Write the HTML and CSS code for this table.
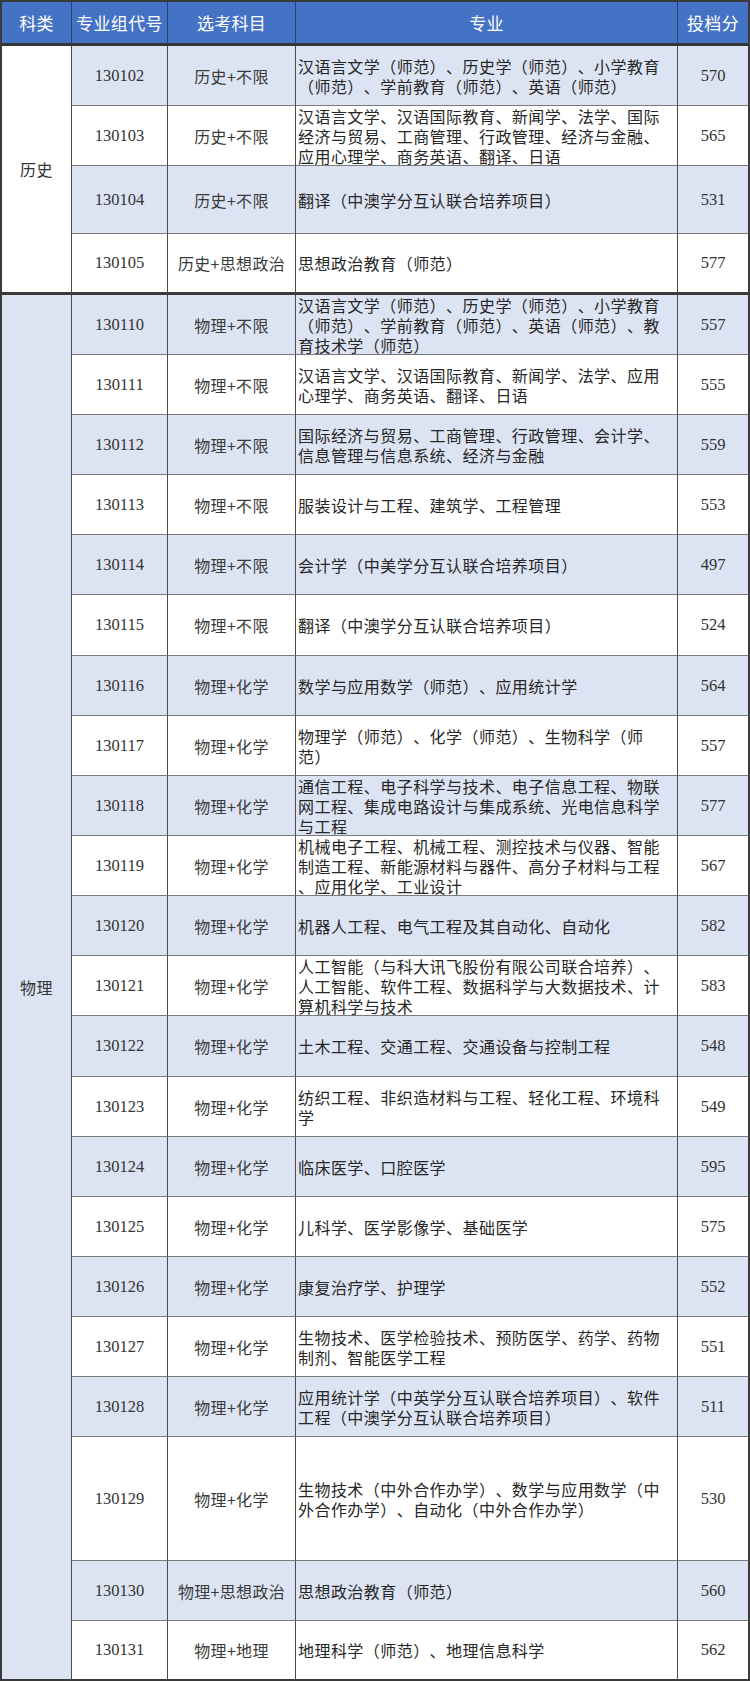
FILE: index.html
```html
<!DOCTYPE html>
<html lang="zh-CN">
<head>
<meta charset="utf-8">
<title>投档分</title>
<link rel="stylesheet" href="styles.css">
</head>
<body>
<table class="score-table">
  <colgroup>
    <col class="c-type"><col class="c-code"><col class="c-subj"><col class="c-major"><col class="c-score">
  </colgroup>
  <thead>
    <tr class="head-row">
      <th>科类</th><th>专业组代号</th><th>选考科目</th><th>专业</th><th class="last">投档分</th>
    </tr>
  </thead>
  <tbody>
    <tr class="r60 alt">
      <td class="type group-end" rowspan="4">历史</td>
      <td class="num">130102</td><td class="subj">历史+不限</td>
      <td class="major"><div>汉语言文学（师范）、历史学（师范）、小学教育<br>（师范）、学前教育（师范）、英语（师范）</div></td>
      <td class="num last">570</td>
    </tr>
    <tr class="r60">
      <td class="num">130103</td><td class="subj">历史+不限</td>
      <td class="major"><div>汉语言文学、汉语国际教育、新闻学、法学、国际<br>经济与贸易、工商管理、行政管理、经济与金融、<br>应用心理学、商务英语、翻译、日语</div></td>
      <td class="num last">565</td>
    </tr>
    <tr class="r68 alt">
      <td class="num">130104</td><td class="subj">历史+不限</td>
      <td class="major"><div>翻译（中澳学分互认联合培养项目）</div></td>
      <td class="num last">531</td>
    </tr>
    <tr class="r61 group-last">
      <td class="num">130105</td><td class="subj">历史+思想政治</td>
      <td class="major"><div>思想政治教育（师范）</div></td>
      <td class="num last">577</td>
    </tr>

    <tr class="r60 alt">
      <td class="type type-alt table-end" rowspan="22">物理</td>
      <td class="num">130110</td><td class="subj">物理+不限</td>
      <td class="major"><div>汉语言文学（师范）、历史学（师范）、小学教育<br>（师范）、学前教育（师范）、英语（师范）、教<br>育技术学（师范）</div></td>
      <td class="num last">557</td>
    </tr>
    <tr class="r60">
      <td class="num">130111</td><td class="subj">物理+不限</td>
      <td class="major"><div>汉语言文学、汉语国际教育、新闻学、法学、应用<br>心理学、商务英语、翻译、日语</div></td>
      <td class="num last">555</td>
    </tr>
    <tr class="r60 alt">
      <td class="num">130112</td><td class="subj">物理+不限</td>
      <td class="major"><div>国际经济与贸易、工商管理、行政管理、会计学、<br>信息管理与信息系统、经济与金融</div></td>
      <td class="num last">559</td>
    </tr>
    <tr class="r60">
      <td class="num">130113</td><td class="subj">物理+不限</td>
      <td class="major"><div>服装设计与工程、建筑学、工程管理</div></td>
      <td class="num last">553</td>
    </tr>
    <tr class="r60 alt">
      <td class="num">130114</td><td class="subj">物理+不限</td>
      <td class="major"><div>会计学（中美学分互认联合培养项目）</div></td>
      <td class="num last">497</td>
    </tr>
    <tr class="r61">
      <td class="num">130115</td><td class="subj">物理+不限</td>
      <td class="major"><div>翻译（中澳学分互认联合培养项目）</div></td>
      <td class="num last">524</td>
    </tr>
    <tr class="r60 alt">
      <td class="num">130116</td><td class="subj">物理+化学</td>
      <td class="major"><div>数学与应用数学（师范）、应用统计学</div></td>
      <td class="num last">564</td>
    </tr>
    <tr class="r60">
      <td class="num">130117</td><td class="subj">物理+化学</td>
      <td class="major"><div>物理学（师范）、化学（师范）、生物科学（师<br>范）</div></td>
      <td class="num last">557</td>
    </tr>
    <tr class="r60 alt">
      <td class="num">130118</td><td class="subj">物理+化学</td>
      <td class="major"><div>通信工程、电子科学与技术、电子信息工程、物联<br>网工程、集成电路设计与集成系统、光电信息科学<br>与工程</div></td>
      <td class="num last">577</td>
    </tr>
    <tr class="r60">
      <td class="num">130119</td><td class="subj">物理+化学</td>
      <td class="major"><div>机械电子工程、机械工程、测控技术与仪器、智能<br>制造工程、新能源材料与器件、高分子材料与工程<br>、应用化学、工业设计</div></td>
      <td class="num last">567</td>
    </tr>
    <tr class="r60 alt">
      <td class="num">130120</td><td class="subj">物理+化学</td>
      <td class="major"><div>机器人工程、电气工程及其自动化、自动化</div></td>
      <td class="num last">582</td>
    </tr>
    <tr class="r60">
      <td class="num">130121</td><td class="subj">物理+化学</td>
      <td class="major"><div>人工智能（与科大讯飞股份有限公司联合培养）、<br>人工智能、软件工程、数据科学与大数据技术、计<br>算机科学与技术</div></td>
      <td class="num last">583</td>
    </tr>
    <tr class="r61 alt">
      <td class="num">130122</td><td class="subj">物理+化学</td>
      <td class="major"><div>土木工程、交通工程、交通设备与控制工程</div></td>
      <td class="num last">548</td>
    </tr>
    <tr class="r60">
      <td class="num">130123</td><td class="subj">物理+化学</td>
      <td class="major"><div>纺织工程、非织造材料与工程、轻化工程、环境科<br>学</div></td>
      <td class="num last">549</td>
    </tr>
    <tr class="r60 alt">
      <td class="num">130124</td><td class="subj">物理+化学</td>
      <td class="major"><div>临床医学、口腔医学</div></td>
      <td class="num last">595</td>
    </tr>
    <tr class="r60">
      <td class="num">130125</td><td class="subj">物理+化学</td>
      <td class="major"><div>儿科学、医学影像学、基础医学</div></td>
      <td class="num last">575</td>
    </tr>
    <tr class="r60 alt">
      <td class="num">130126</td><td class="subj">物理+化学</td>
      <td class="major"><div>康复治疗学、护理学</div></td>
      <td class="num last">552</td>
    </tr>
    <tr class="r60">
      <td class="num">130127</td><td class="subj">物理+化学</td>
      <td class="major"><div>生物技术、医学检验技术、预防医学、药学、药物<br>制剂、智能医学工程</div></td>
      <td class="num last">551</td>
    </tr>
    <tr class="r60 alt">
      <td class="num">130128</td><td class="subj">物理+化学</td>
      <td class="major"><div>应用统计学（中英学分互认联合培养项目）、软件<br>工程（中澳学分互认联合培养项目）</div></td>
      <td class="num last">511</td>
    </tr>
    <tr class="r124">
      <td class="num">130129</td><td class="subj">物理+化学</td>
      <td class="major"><div>生物技术（中外合作办学）、数学与应用数学（中<br>外合作办学）、自动化（中外合作办学）</div></td>
      <td class="num last">530</td>
    </tr>
    <tr class="r60 alt">
      <td class="num">130130</td><td class="subj">物理+思想政治</td>
      <td class="major"><div>思想政治教育（师范）</div></td>
      <td class="num last">560</td>
    </tr>
    <tr class="r60 table-last">
      <td class="num">130131</td><td class="subj">物理+地理</td>
      <td class="major"><div>地理科学（师范）、地理信息科学</div></td>
      <td class="num last">562</td>
    </tr>
  </tbody>
</table>
</body>
</html>
```

FILE: styles.css
```css
html, body {
  margin: 0;
  padding: 0;
  background: #ffffff;
}

.score-table {
  width: 750px;
  table-layout: fixed;
  border-collapse: separate;
  border-spacing: 0;
  border-top: 2px solid #3a3a3a;
  border-left: 2px solid #3a3a3a;
  font-family: "Noto Sans CJK SC", "Noto Sans", sans-serif;
  font-size: 16px;
  line-height: 20px;
  color: #2e2e2e;
  text-spacing-trim: space-all;
}

.c-type { width: 70px; }
.c-code { width: 96px; }
.c-subj { width: 128px; }
.c-major { width: 382px; }
.c-score { width: 72px; }

.score-table th,
.score-table td {
  padding: 0;
  border-right: 1px solid #4a4a4a;
  border-bottom: 1px solid #7a7a7a;
  text-align: center;
  vertical-align: middle;
  white-space: nowrap;
  overflow: hidden;
}

.score-table .last {
  border-right: 2px solid #3a3a3a;
}

.head-row {
  height: 44px;
}

.head-row th {
  background: #4472c4;
  color: #ffffff;
  font-weight: normal;
  font-size: 17px;
  letter-spacing: 0.3px;
  border-bottom: 3px solid #353535;
  border-right-color: #2f3f66;
}

.r60 { height: 60px; }
.r61 { height: 61px; }
.r68 { height: 68px; }
.r124 { height: 124px; }

.alt td {
  background: #dce4f3;
}

.score-table td.type {
  background: #ffffff;
  color: #333333;
  letter-spacing: 0.4px;
}

.score-table td.type-alt {
  background: #dce4f3;
}

.num {
  font-family: "Liberation Serif", "Times New Roman", serif;
  font-size: 16.5px;
  color: #333333;
}

.subj {
  color: #3a3a3a;
  letter-spacing: 0.3px;
}

.score-table td.major {
  text-align: left;
  padding-left: 2px;
  letter-spacing: 0.45px;
  color: #262626;
}

.major div {
  margin: -2px 0;
}

.score-table .group-end,
.group-last td {
  border-bottom: 3px solid #3a3a3a;
}

.score-table .table-end,
.table-last td {
  border-bottom: 2px solid #3a3a3a;
}
```
